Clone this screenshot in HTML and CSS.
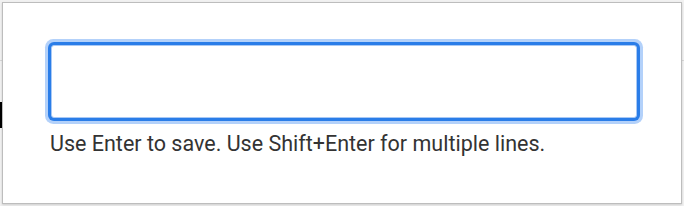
FILE: index.html
```html
<!DOCTYPE html>
<html lang="en">
<head>
    <meta charset="UTF-8">
    <meta name="viewport" content="width=device-width, initial-scale=1.0">
    <title>Edit cell</title>
    <link rel="stylesheet" href="styles.css">
</head>
<body>

    <!-- Page behind the editor -->
    <div class="page">
        <div class="page-rule"></div>
        <div class="page-mark"></div>
    </div>

    <!-- Editor popup -->
    <div class="editor" role="dialog" aria-label="Edit value">
        <textarea class="editor-input" aria-label="Value"></textarea>
        <p class="editor-hint">Use Enter to save. Use Shift+Enter for multiple lines.</p>
    </div>

</body>
</html>
```

FILE: styles.css
```css
html, body {
    margin: 0;
    height: 100%;
}

body {
    background-color: #f1f1f1;
    font-family: Roboto, "Liberation Sans", sans-serif;
    position: relative;
    overflow: hidden;
}

.page {
    padding-top: 60px;
}

.page-rule {
    height: 1px;
    background-color: #d6d6d6;
}

.page-mark {
    width: 3px;
    height: 26px;
    margin-top: 41px;
    background-color: #000;
}

.editor {
    position: absolute;
    top: 2px;
    left: 2px;
    right: 2px;
    bottom: 2px;
    background-color: #fff;
    border: 1px solid #bdbdbd;
    box-shadow: 0 1px 2px rgba(0, 0, 0, 0.15);
    padding: 42px 44px 0 48px;
    box-sizing: border-box;
}

.editor-input {
    display: block;
    width: 100%;
    height: 73px;
    box-sizing: border-box;
    margin: 0;
    border: 1px solid #a9c9f5;
    border-radius: 3px;
    outline: none;
    resize: none;
    font: inherit;
    box-shadow: 0 0 0 3px #2a7de8, 0 0 0 6px #b3d1fa;
}

.editor-hint {
    margin: 13px 0 0 -1px;
    font-size: 21.5px;
    line-height: 26px;
    color: #333;
}
```
